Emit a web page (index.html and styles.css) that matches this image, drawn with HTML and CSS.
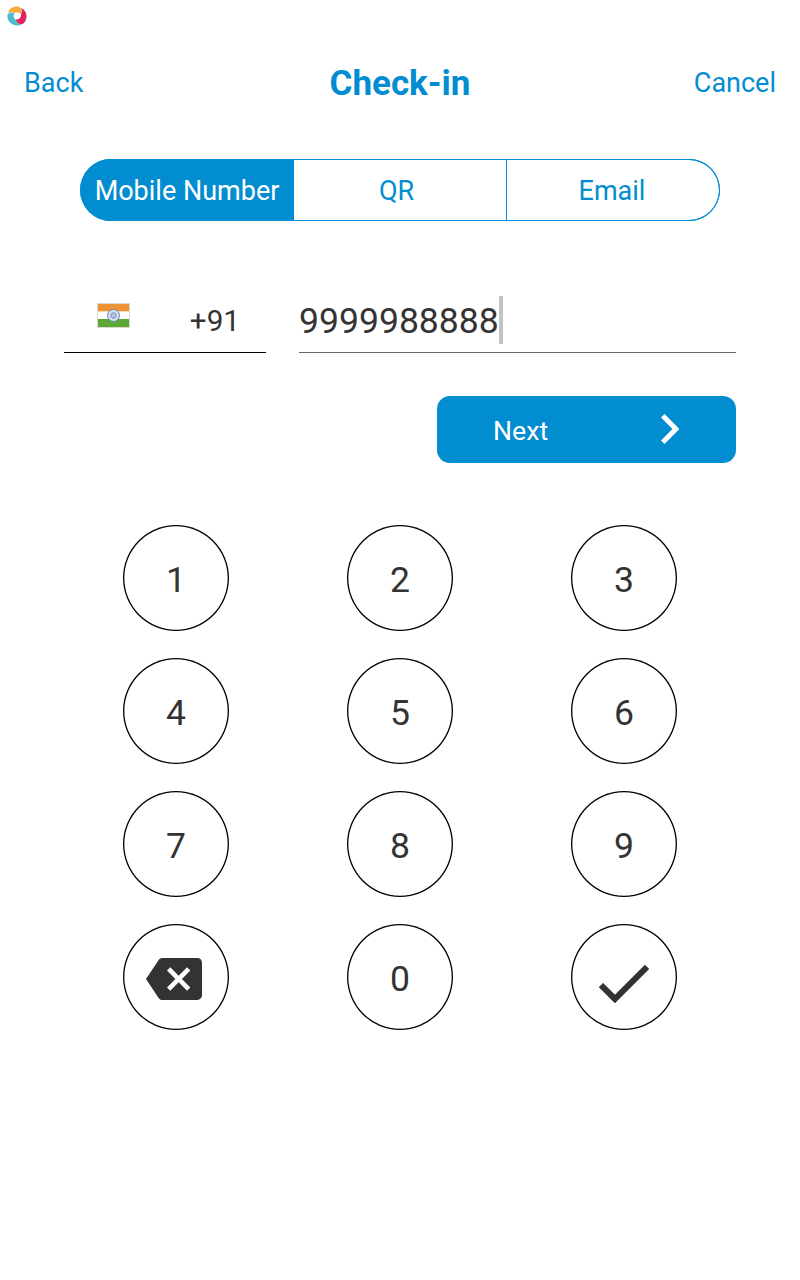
FILE: index.html
```html
<!DOCTYPE html>
<html lang="en">
<head>
<meta charset="utf-8">
<title>Check-in</title>
<link rel="stylesheet" href="styles.css">
</head>
<body>
<div class="status">
  <svg class="logo" viewBox="0 0 20 20">
    <path d="M1 7C2 2.500 6 .2 10.500 .5c2 .1 3.500 1.500 3.700 3.500L14 8.500C12.500 6.500 10 6 7.500 7 5.500 5.500 3 5.500 1 7z" fill="#f5ab35"/>
    <path d="M.5 8.500C2.500 6 5.500 6 7.500 7.200 6 9.500 6.500 12 8.500 13.500c1 2.500 3 4.500 6 5-3.500 1.700-8 1.200-11-1.500C1 14.500 0 11.500 .5 8.500z" fill="#4bbccb"/>
    <path d="M14.200 2C17.500 3.800 19.700 7 19.500 10.500c-.2 4-2 6.800-4.500 7.800-3 0-5.500-2-6.300-4.800 3 .5 5.300-1.500 5.300-4.500.7-2 .9-4.500.2-7z" fill="#e3225f"/>
  </svg>
</div>
<header class="header">
  <a class="link">Back</a>
  <h1 class="title">Check-in</h1>
  <a class="link link-end">Cancel</a>
</header>
<nav class="tabs">
  <a class="tab tab-active">Mobile Number</a>
  <a class="tab">QR</a>
  <a class="tab tab-last">Email</a>
</nav>
<main class="form">
  <div class="fields">
    <div class="country">
      <svg class="flag" viewBox="0 0 33 25">
        <path d="M0 0h33v25H0z" fill="#d9d9d0"/>
        <path d="M1 1h31v7.500H1z" fill="#ef9234"/>
        <path d="M1 8.500h31V16H1z" fill="#fff"/>
        <path d="M1 16h31v8H1z" fill="#5ba934"/>
        <circle cx="16.500" cy="12.500" r="6" fill="#d5dff0" stroke="#6783bf"/>
        <circle cx="16.500" cy="12.500" r="2.700" fill="#b3c1e2" stroke="#7890c8"/>
      </svg>
      <span class="code">+91</span>
    </div>
    <div class="phone"><span>9999988888</span><i class="caret"></i></div>
  </div>
  <button class="next">
    <span>Next</span>
    <svg class="chevron" viewBox="8.590 6 7.410 12"><path d="M10 6 8.590 7.410 13.170 12l-4.580 4.590L10 18l6-6z" fill="#fff"/></svg>
  </button>
</main>
<section class="keypad">
  <button class="key">1</button>
  <button class="key">2</button>
  <button class="key">3</button>
  <button class="key">4</button>
  <button class="key">5</button>
  <button class="key">6</button>
  <button class="key">7</button>
  <button class="key">8</button>
  <button class="key">9</button>
  <button class="key">
    <svg class="backspace" viewBox="0 0 24 24"><path d="M22 3H7c-.69 0-1.230.35-1.590.88L0 12l5.410 8.110c.36.53.9.89 1.590.89h15c1.100 0 2-.9 2-2V5c0-1.100-.9-2-2-2zm-3 12.590L17.590 17 14 13.410 10.410 17 9 15.590 12.590 12 9 8.410 10.410 7 14 10.590 17.590 7 19 8.410 15.410 12 19 15.590z" fill="#333"/></svg>
  </button>
  <button class="key">0</button>
  <button class="key">
    <svg class="check" viewBox="3.410 5.590 17.590 13.410"><path d="M9 16.170 4.830 12l-1.420 1.410L9 19 21 7l-1.410-1.410z" fill="#333" stroke="#333" stroke-width=".2"/></svg>
  </button>
</section>
</body>
</html>
```
FILE: styles.css
```css
* { box-sizing: border-box; }
body {
  margin: 0;
  height: 1280px;
  background: #fff;
  color: #333;
  font-family: Roboto, sans-serif;
}
button { border: 0; padding: 0; background: none; font: inherit; color: inherit; }
svg { display: block; }
.status { height: 32px; padding: 6px 7px; }
.logo { width: 20px; height: 20px; }
.header {
  display: grid;
  grid-template-columns: 1fr auto 1fr;
  align-items: center;
  height: 100px;
  padding: 0 24px;
  color: #028dd1;
}
.link { font-size: 27px; padding-top: 1px; }
.link-end { text-align: right; }
.title { margin: 0; padding-top: 2px; font-size: 35px; font-weight: 700; }
.tabs {
  display: grid;
  grid-template-columns: 214px 212px 214px;
  height: 62px;
  margin: 27px 80px 0;
  border-radius: 31px;
  box-shadow: inset 0 0 0 1px #028dd1;
}
.tab {
  display: flex;
  align-items: center;
  justify-content: center;
  padding-top: 1px;
  padding-right: 7px;
  font-size: 27px;
  color: #028dd1;
}
.tab-active { padding-right: 0; background: #028dd1; color: #fff; border-radius: 31px 0 0 31px; }
.tab-last { padding-right: 2px; border-radius: 0 31px 31px 0; box-shadow: inset 0 0 0 1px #028dd1; }
.form { padding: 69px 64px 0; }
.fields { display: grid; grid-template-columns: 202px 437px; gap: 33px; height: 63px; }
.country {
  display: flex;
  justify-content: space-between;
  padding: 0 26px 0 33px;
  border-bottom: 1px solid #000;
}
.flag { width: 33px; height: 25px; margin-top: 13px; }
.code { font-size: 29.7px; line-height: 62px; }
.phone { display: flex; border-bottom: 1px solid #666; font-size: 35.56px; line-height: 62px; }
.caret { width: 4px; height: 48px; margin-top: 6px; background: #c3c3c3; }
.next {
  display: flex;
  justify-content: space-between;
  align-items: center;
  width: 299px;
  height: 67px;
  margin: 43px 0 0 auto;
  padding: 0 57px 0 56px;
  border-radius: 13px;
  background: #028dd1;
  color: #fff;
  font-size: 26.67px;
}
.next span { padding-top: 2px; }
.chevron { width: 18.5px; height: 30px; margin-bottom: 2px; }
.keypad {
  display: grid;
  grid-template-columns: repeat(3, 224px);
  grid-auto-rows: 133px;
  justify-content: center;
  justify-items: center;
  margin-top: 62px;
}
.key {
  display: flex;
  align-items: center;
  justify-content: center;
  width: 106px;
  height: 106px;
  padding-top: 3px;
  border-radius: 50%;
  box-shadow: inset 0 0 0 1.33px #000;
  font-size: 35.56px;
}
.backspace { width: 56px; height: 56px; margin: 0 4px 0 0; }
.check { width: 50px; height: 38px; margin-top: 11px; overflow: visible; }
```
